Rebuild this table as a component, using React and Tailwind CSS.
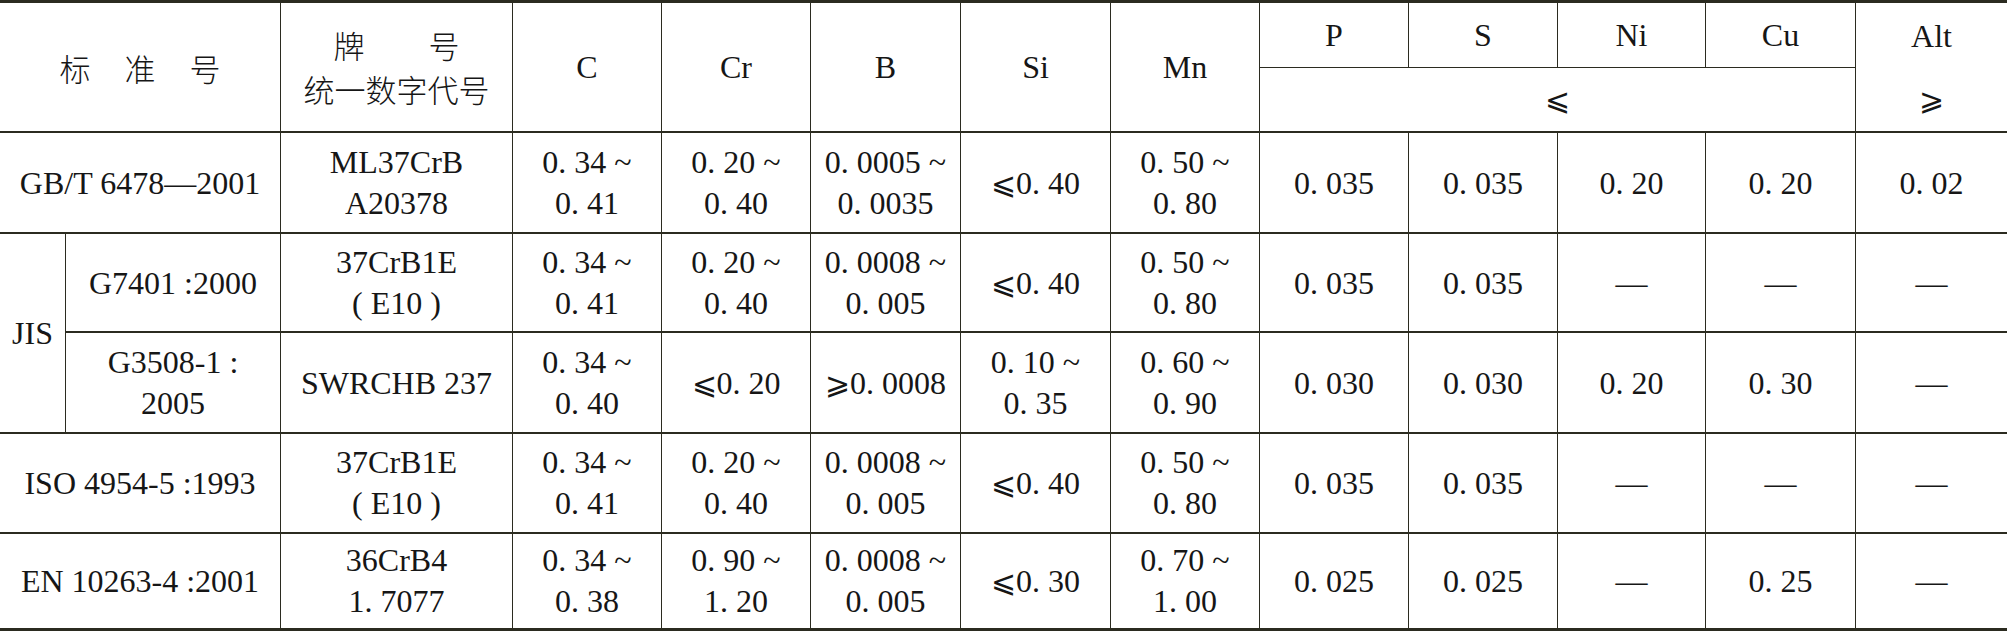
import React from "react";

const SERIF = { fontFamily: "'Liberation Serif', 'Noto Sans CJK SC', serif" };

function Cell({ className = "", last = false, bottom = "b2", children }) {
  const r = last ? "" : "border-r";
  const b = bottom === "b2" ? "border-b-2" : bottom === "b1" ? "border-b" : "";
  return (
    <div
      style={SERIF}
      className={"flex items-center justify-center text-center border-[#2b2b20] " + r + " " + b + " " + className}
    >
      {children}
    </div>
  );
}

function Two({ a, b }) {
  return (
    <div className="leading-[41px]">
      <div>{a}</div>
      <div>{b}</div>
    </div>
  );
}

function Le() {
  return <span className="font-[DejaVu_Serif] text-[30px]">⩽</span>;
}
function Ge() {
  return <span className="font-[DejaVu_Serif] text-[30px]">⩾</span>;
}

function DataCells({ cells, bottom }) {
  return cells.map((c, i) => (
    <Cell key={i} last={i === cells.length - 1} bottom={bottom}>
      {Array.isArray(c) ? <Two a={c[0]} b={c[1]} /> : c}
    </Cell>
  ));
}

export default function App() {
  const r1 = [
    ["ML37CrB", "A20378"],
    ["0. 34 ~", "0. 41"],
    ["0. 20 ~", "0. 40"],
    ["0. 0005 ~", "0. 0035"],
    <span><Le />0. 40</span>,
    ["0. 50 ~", "0. 80"],
    "0. 035",
    "0. 035",
    "0. 20",
    "0. 20",
    "0. 02",
  ];
  const r2 = [
    "G7401 :2000",
    ["37CrB1E", "( E10 )"],
    ["0. 34 ~", "0. 41"],
    ["0. 20 ~", "0. 40"],
    ["0. 0008 ~", "0. 005"],
    <span><Le />0. 40</span>,
    ["0. 50 ~", "0. 80"],
    "0. 035",
    "0. 035",
    "—",
    "—",
    "—",
  ];
  const r3 = [
    ["G3508-1 :", "2005"],
    "SWRCHB 237",
    ["0. 34 ~", "0. 40"],
    <span><Le />0. 20</span>,
    <span><Ge />0. 0008</span>,
    ["0. 10 ~", "0. 35"],
    ["0. 60 ~", "0. 90"],
    "0. 030",
    "0. 030",
    "0. 20",
    "0. 30",
    "—",
  ];
  const r4 = [
    ["37CrB1E", "( E10 )"],
    ["0. 34 ~", "0. 41"],
    ["0. 20 ~", "0. 40"],
    ["0. 0008 ~", "0. 005"],
    <span><Le />0. 40</span>,
    ["0. 50 ~", "0. 80"],
    "0. 035",
    "0. 035",
    "—",
    "—",
    "—",
  ];
  const r5 = [
    ["36CrB4", "1. 7077"],
    ["0. 34 ~", "0. 38"],
    ["0. 90 ~", "1. 20"],
    ["0. 0008 ~", "0. 005"],
    <span><Le />0. 30</span>,
    ["0. 70 ~", "1. 00"],
    "0. 025",
    "0. 025",
    "—",
    "0. 25",
    "—",
  ];

  return (
    <div className="w-[2007px] h-[631px] bg-white" style={SERIF}>
      <div
        style={SERIF}
        className="w-[2007px] h-[631px] grid grid-cols-[66px_215px_232px_149px_149px_150px_150px_149px_149px_149px_148px_150px_151px] grid-rows-[65px_65px_101px_99px_101px_100px_94px] border-t-[3px] border-b-[3px] border-[#2b2b20] text-[32px] text-[#161616] leading-none"
      >
        <Cell className="col-span-2 row-span-2">
          <div className="flex gap-[34px] font-[Noto_Sans_CJK_SC] font-light text-[31px]">
            <span>标</span>
            <span>准</span>
            <span>号</span>
          </div>
        </Cell>
        <Cell className="row-span-2">
          <div className="font-[Noto_Sans_CJK_SC] font-light text-[31px] leading-[44px]">
            <div className="flex justify-center gap-[64px]">
              <span>牌</span>
              <span>号</span>
            </div>
            <div>统一数字代号</div>
          </div>
        </Cell>
        <Cell className="row-span-2">C</Cell>
        <Cell className="row-span-2">Cr</Cell>
        <Cell className="row-span-2">B</Cell>
        <Cell className="row-span-2">Si</Cell>
        <Cell className="row-span-2">Mn</Cell>
        <Cell bottom="b1">P</Cell>
        <Cell bottom="b1">S</Cell>
        <Cell bottom="b1">Ni</Cell>
        <Cell bottom="b1">Cu</Cell>
        <div style={SERIF} className="row-span-2 border-b-2 border-[#2b2b20] flex flex-col">
          <div className="h-[65px] flex items-center justify-center">Alt</div>
          <div className="flex-1 flex items-center justify-center"><Ge /></div>
        </div>
        <Cell className="col-span-4"><Le /></Cell>

        <Cell className="col-span-2">GB/T 6478—2001</Cell>
        <DataCells cells={r1} bottom="b2" />

        <Cell className="row-span-2">JIS</Cell>
        <DataCells cells={r2} bottom="b2" />
        <DataCells cells={r3} bottom="b2" />

        <Cell className="col-span-2">ISO 4954-5 :1993</Cell>
        <DataCells cells={r4} bottom="b2" />

        <Cell className="col-span-2" bottom="none">EN 10263-4 :2001</Cell>
        <DataCells cells={r5} bottom="none" />
      </div>
    </div>
  );
}
